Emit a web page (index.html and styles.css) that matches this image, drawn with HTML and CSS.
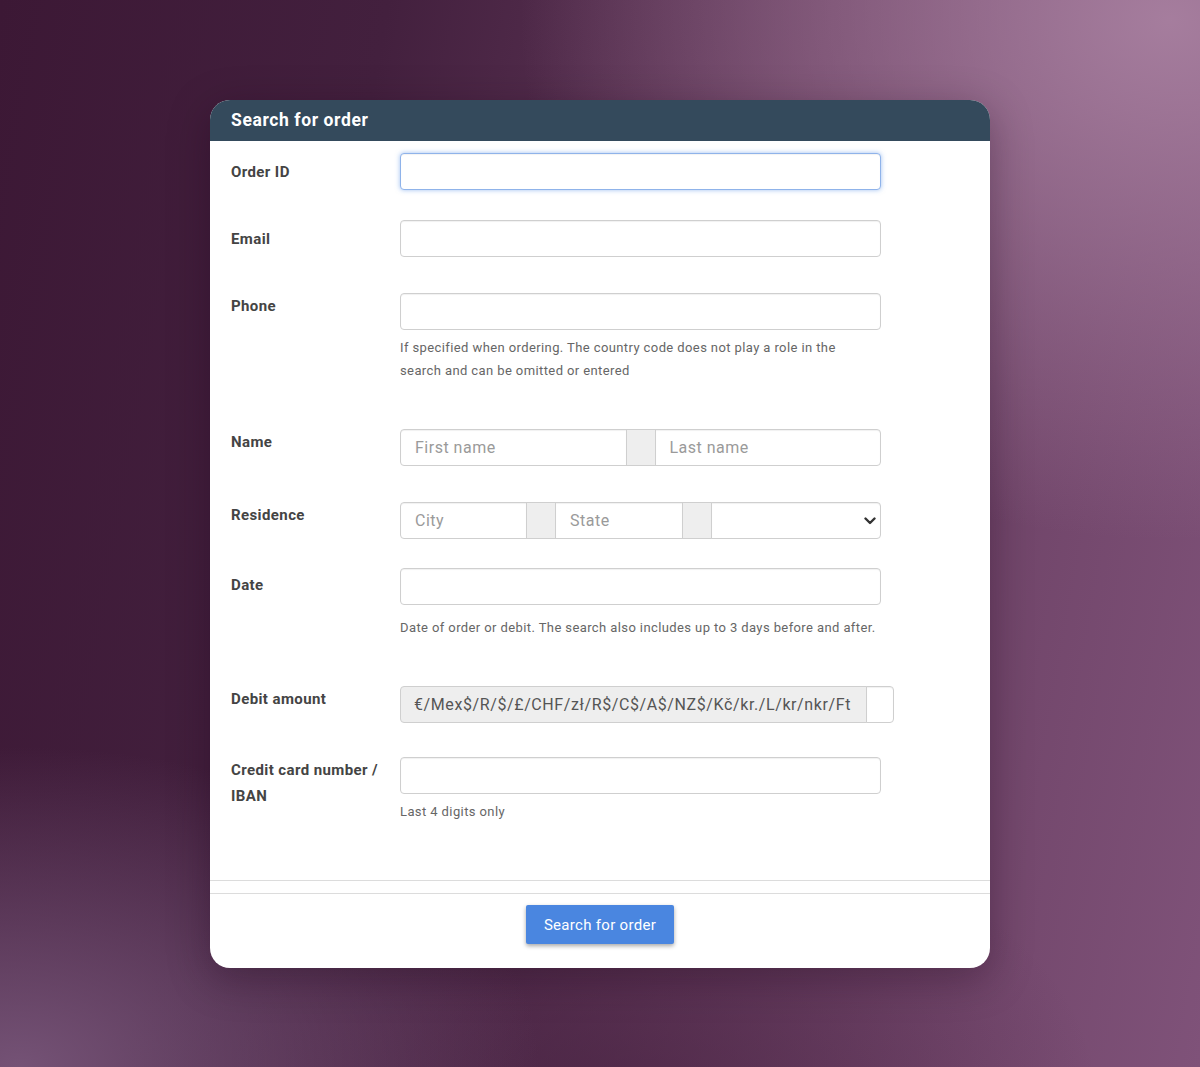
FILE: index.html
```html
<!DOCTYPE html>
<html lang="en">
<head>
<meta charset="utf-8">
<title>Search for order</title>
<link rel="stylesheet" href="styles.css">
</head>
<body>
<div class="page">
  <form class="card">
    <div class="card-head">Search for order</div>
    <div class="card-body">
      <div class="row row-a">
        <label class="lbl lbl-low">Order ID</label>
        <div class="field"><input class="inp inp-focus" type="text"></div>
      </div>
      <div class="row row-b">
        <label class="lbl lbl-low">Email</label>
        <div class="field"><input class="inp" type="text"></div>
      </div>
      <div class="row row-c">
        <label class="lbl">Phone</label>
        <div class="field">
          <input class="inp" type="text">
          <p class="help help-tight help-narrow">If specified when ordering. The country code does not play a role in the search and can be omitted or entered</p>
        </div>
      </div>
      <div class="row row-d">
        <label class="lbl">Name</label>
        <div class="field">
          <div class="group">
            <input class="inp gi gi-first" type="text" placeholder="First name">
            <span class="addon"></span>
            <input class="inp gi gi-last" type="text" placeholder="Last name">
          </div>
        </div>
      </div>
      <div class="row row-e">
        <label class="lbl">Residence</label>
        <div class="field">
          <div class="group">
            <input class="inp gi gi-first gi-city" type="text" placeholder="City">
            <span class="addon"></span>
            <input class="inp gi gi-state" type="text" placeholder="State">
            <span class="addon"></span>
            <div class="sel-wrap">
              <select class="inp sel"><option></option></select>
              <svg class="chev" width="12" height="8" viewBox="0 0 12 8"><path d="M1.5 1.5 L6 6 L10.5 1.5" fill="none" stroke="#333" stroke-width="2.4" stroke-linecap="round" stroke-linejoin="round"/></svg>
            </div>
          </div>
        </div>
      </div>
      <div class="row row-f">
        <label class="lbl lbl-date">Date</label>
        <div class="field">
          <input class="inp" type="text">
          <p class="help help-wide">Date of order or debit. The search also includes up to 3 days before and after.</p>
        </div>
      </div>
      <div class="row row-g">
        <label class="lbl">Debit amount</label>
        <div class="field">
          <div class="group group-amount">
            <span class="addon addon-text">€/Mex$/R/$/£/CHF/zł/R$/C$/A$/NZ$/Kč/kr./L/kr/nkr/Ft</span>
            <input class="inp gi gi-amount" type="text">
          </div>
        </div>
      </div>
      <div class="row row-h">
        <label class="lbl">Credit card number / IBAN</label>
        <div class="field">
          <input class="inp" type="text">
          <p class="help help-tight">Last 4 digits only</p>
        </div>
      </div>
    </div>
    <div class="card-foot">
      <button class="btn" type="button">Search for order</button>
    </div>
  </form>
</div>
</body>
</html>
```

FILE: styles.css
```css
* { box-sizing: border-box; }
html, body { margin: 0; padding: 0; }
body {
  height: 1067px;
  overflow: hidden;
  font-family: Roboto, "Liberation Sans", Arial, sans-serif;
  background:
    radial-gradient(ellipse 650px 520px at 1170px 20px, rgba(168, 128, 160, 0.95), rgba(168, 128, 160, 0) 100%),
    radial-gradient(ellipse 520px 320px at 20px 1067px, rgba(122, 88, 124, 0.9), rgba(122, 88, 124, 0) 100%),
    radial-gradient(ellipse 500px 300px at 600px 1100px, rgba(60, 25, 55, 0.5), rgba(60, 25, 55, 0) 100%),
    linear-gradient(100deg, #3c1835 0%, #43203e 28%, #643a5c 60%, #7f5279 100%);
}
.page {
  display: flex;
  justify-content: center;
  padding-top: 100px;
}
.card {
  width: 780px;
  background: #fff;
  border-radius: 20px;
  overflow: hidden;
  box-shadow: 0 10px 40px rgba(30, 5, 25, 0.35);
  margin: 0;
}
.card-head {
  height: 41px;
  line-height: 40px;
  background: #344a5c;
  color: #fff;
  font-weight: 700;
  font-size: 17.5px;
  letter-spacing: 0.6px;
  padding: 0 21px;
}
.card-body {
  padding: 12px 21px 57px;
  border-bottom: 1px solid #dcdcdc;
}
.row {
  display: grid;
  grid-template-columns: 169px 481px;
  align-items: start;
}
.row-a { margin-bottom: 30px; }
.row-b { margin-bottom: 36px; }
.row-c { margin-bottom: 47px; }
.row-d { margin-bottom: 36px; }
.row-e { margin-bottom: 29px; }
.row-f { margin-bottom: 47px; }
.row-g { margin-bottom: 34px; }
.lbl {
  font-size: 15px;
  font-weight: 700;
  color: #444;
  line-height: 26px;
  letter-spacing: 0.4px;
  padding-right: 12px;
}
.lbl-low { padding-top: 6px; }
.lbl-date { padding-top: 4px; }
.field { min-width: 0; }
.inp {
  display: block;
  width: 100%;
  height: 37px;
  margin: 0;
  border: 1px solid #cfcfcf;
  border-radius: 4px;
  background: #fff;
  box-shadow: inset 0 1px 1px rgba(0, 0, 0, 0.06);
  font-family: Roboto, "Liberation Sans", Arial, sans-serif;
  font-size: 16px;
  letter-spacing: 0.5px;
  color: #555;
  padding: 0 14px;
  outline: none;
}
.inp::placeholder { color: #9a9a9a; }
.inp-focus {
  border-color: #8fb3ea;
  box-shadow: inset 0 1px 1px rgba(0, 0, 0, 0.05), 0 0 5px rgba(80, 140, 230, 0.55);
}
.help {
  margin: 0;
  font-size: 13px;
  line-height: 23px;
  letter-spacing: 0.4px;
  color: #666;
}
.help-tight { margin-top: 6px; }
.help-narrow { max-width: 460px; }
.help-wide { margin-top: 11px; white-space: nowrap; }
.group {
  display: flex;
  height: 37px;
}
.gi {
  border-radius: 0;
  flex: 1 1 0;
  min-width: 0;
}
.gi-first { border-radius: 4px 0 0 4px; }
.gi-last { border-radius: 0 4px 4px 0; }
.gi-city { flex: 0 0 127px; }
.gi-state { flex: 0 0 128px; }
.addon {
  flex: 0 0 30px;
  height: 37px;
  background: #eee;
  border: 1px solid #cfcfcf;
  margin: 0 -1px;
  position: relative;
}
.sel-wrap {
  flex: 1 1 0;
  position: relative;
  min-width: 0;
}
.sel {
  appearance: none;
  -webkit-appearance: none;
  border-radius: 0 4px 4px 0;
}
.chev {
  position: absolute;
  right: 5px;
  top: 15px;
  pointer-events: none;
}
.group-amount { width: 494px; }
.addon-text {
  flex: 0 0 467px;
  margin: 0 -1px 0 0;
  border-radius: 4px 0 0 4px;
  font-size: 16px;
  letter-spacing: 0.6px;
  color: #555;
  line-height: 35px;
  padding-left: 13px;
  white-space: nowrap;
  overflow: hidden;
}
.gi-amount {
  flex: 1 1 0;
  border-radius: 0 4px 4px 0;
  padding: 0;
}
.card-foot {
  margin-top: 12px;
  border-top: 1px solid #dcdcdc;
  padding: 11px 0 24px;
  display: flex;
  justify-content: center;
}
.btn {
  width: 148px;
  height: 39px;
  border: 0;
  border-radius: 2px;
  background: #4a86e0;
  color: #fff;
  font-family: Roboto, "Liberation Sans", Arial, sans-serif;
  font-size: 15px;
  letter-spacing: 0.3px;
  box-shadow: 0 2px 4px rgba(0, 0, 0, 0.35);
  padding: 0;
}
```
